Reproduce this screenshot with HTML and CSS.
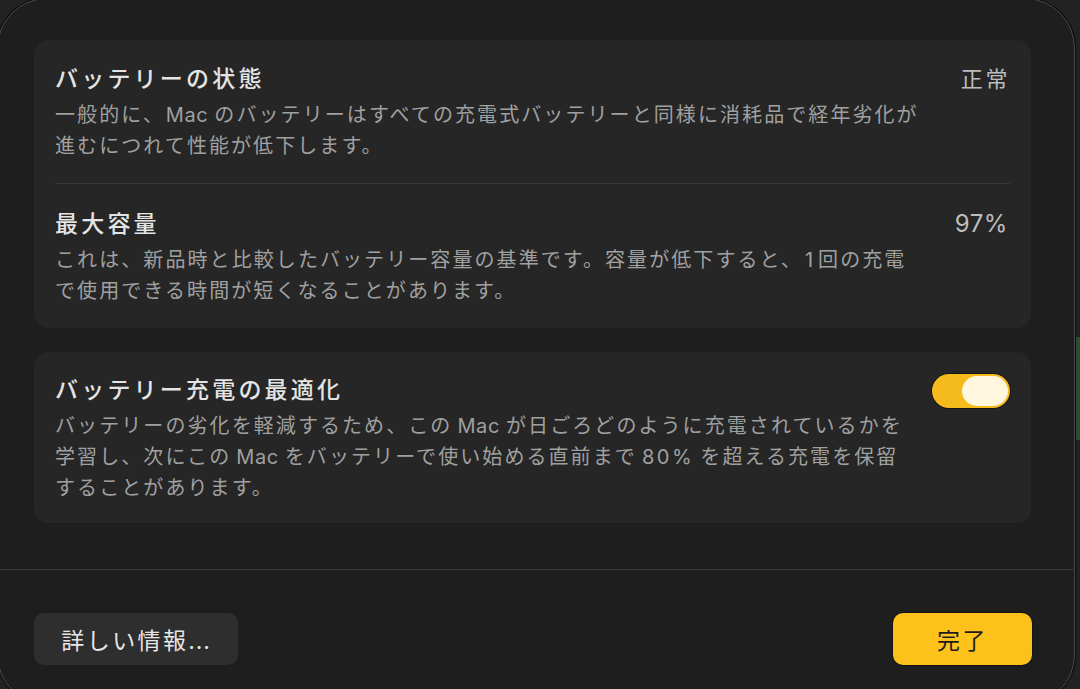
FILE: index.html
```html
<!DOCTYPE html>
<html lang="ja">
<head>
<meta charset="utf-8">
<title>バッテリーの状態</title>
<link rel="stylesheet" href="styles.css">
</head>
<body>
<div class="desk-strip"></div>
<div class="window">
  <div class="content">
    <section class="card">
      <div class="row">
        <div class="text">
          <div class="title">バッテリーの状態</div>
          <div class="desc">一般的に、<span class="lat lat-p">Mac</span>のバッテリーはすべての充電式バッテリーと同様に消耗品で経年劣化が<br>進むにつれて性能が低下します。</div>
        </div>
        <div class="value">正常</div>
      </div>
      <div class="divider"></div>
      <div class="row">
        <div class="text">
          <div class="title">最大容量</div>
          <div class="desc">これは、新品時と比較したバッテリー容量の基準です。容量が低下すると、<span class="num">1</span>回の充電<br>で使用できる時間が短くなることがあります。</div>
        </div>
        <div class="value value-num">97%</div>
      </div>
    </section>
    <section class="card">
      <div class="row row-toggle">
        <div class="text">
          <div class="title">バッテリー充電の最適化</div>
          <div class="desc">バッテリーの劣化を軽減するため、この<span class="lat">Mac</span>が日ごろどのように充電されているかを<br>学習し、次にこの<span class="lat">Mac</span>をバッテリーで使い始める直前まで<span class="lat lat-wide">80%</span>を超える充電を保留<br>することがあります。</div>
        </div>
        <div class="toggle"><div class="knob"></div></div>
      </div>
    </section>
  </div>
  <div class="sep"></div>
  <div class="footer">
    <button class="btn btn-secondary">詳しい情報<span class="dots">...</span></button>
    <button class="btn btn-primary">完了</button>
  </div>
</div>
</body>
</html>
```

FILE: styles.css
```css
html, body {
  margin: 0;
  padding: 0;
}
body {
  width: 1080px;
  height: 689px;
  overflow: hidden;
  background: #222222;
  position: relative;
  font-family: "Inter", "Noto Sans CJK JP", sans-serif;
  -webkit-font-smoothing: antialiased;
}
.desk-strip {
  position: absolute;
  left: 1076px;
  top: 337px;
  width: 4px;
  height: 103px;
  background: #2e4a30;
}
.window {
  position: absolute;
  left: -3px;
  top: -2px;
  width: 1078px;
  height: 707px;
  box-sizing: border-box;
  border-radius: 50px;
  background: #1e1e1e;
  border: 1px solid #4a4a4a;
  box-shadow: 0 0 0 1px #0c0c0c;
  display: flex;
  flex-direction: column;
  overflow: hidden;
}
.content {
  padding: 41px 43px 0 36px;
  display: flex;
  flex-direction: column;
  gap: 24px;
}
.card {
  background: #262626;
  border-radius: 14px;
  padding: 0 21px 0 21px;
}
.row {
  display: flex;
  justify-content: space-between;
  align-items: flex-start;
  padding: 24px 2px 21px 0;
}
.row + .divider + .row {
  padding-top: 25px;
  padding-bottom: 21px;
}
.row-toggle {
  padding-top: 23px;
  padding-bottom: 19px;
}
.divider {
  height: 1px;
  background: #363636;
}
.title {
  font-size: 23px;
  line-height: 30px;
  letter-spacing: 3.2px;
  font-weight: 500;
  color: #e4e4e4;
}
.desc {
  margin-top: 6px;
  font-size: 20px;
  line-height: 31px;
  letter-spacing: 2.08px;
  color: #a0a0a0;
  white-space: nowrap;
}
.lat {
  letter-spacing: 0.6px;
  margin: 0 6px 0 5px;
}
.lat-p {
  margin-left: 1px;
}
.lat-wide {
  letter-spacing: 2.6px;
}
.num {
  letter-spacing: 1px;
  margin: 0 4px 0 2px;
}
.value {
  font-size: 22px;
  line-height: 30px;
  letter-spacing: 2.6px;
  margin-right: -2px;
  color: #bdbdbd;
}
.value-num {
  font-size: 24px;
  letter-spacing: 0.6px;
  margin-right: 0;
}
.toggle {
  margin-top: -1px;
  margin-right: -2px;
  width: 78px;
  height: 34px;
  box-sizing: border-box;
  border-radius: 17px;
  background: #f5bb1c;
  box-shadow: 0 0 0 1px #151515;
  padding: 2px;
  display: flex;
  justify-content: flex-end;
}
.knob {
  width: 46px;
  height: 30px;
  border-radius: 15px;
  background: #fff6de;
}
.sep {
  margin-top: 46px;
  height: 1px;
  background: #383838;
}
.footer {
  display: flex;
  justify-content: space-between;
  padding: 43px 42px 0 36px;
}
.btn {
  font-family: "Inter", "Noto Sans CJK JP", sans-serif;
  height: 52px;
  border: none;
  border-radius: 10px;
  font-size: 23px;
  letter-spacing: 2.4px;
  padding: 0;
  cursor: default;
}
.dots {
  letter-spacing: 0.8px;
}
.btn-secondary {
  width: 204px;
  background: #2e2e2e;
  color: #e6e6e6;
}
.btn-primary {
  width: 139px;
  background: #fcc21b;
  color: #1c1c1c;
  box-shadow: 0 0 0 1px #141414;
}
```
